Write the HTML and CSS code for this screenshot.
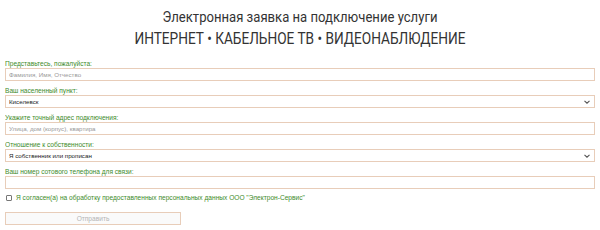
FILE: index.html
```html
<!DOCTYPE html>
<html>
<head>
  <meta charset="UTF-8" />
  <title>Электронная заявка</title>
  <link rel="stylesheet" href="styles.css">
</head>
<body>
  <div class="head">
    <div class="head-top">Электронная заявка на подключение услуги</div>
    <div class="head-main">ИНТЕРНЕТ • КАБЕЛЬНОЕ ТВ • ВИДЕОНАБЛЮДЕНИЕ</div>
  </div>

  <form class="order">
    <label class="field">
      <span class="caption">Представьтесь, пожалуйста:</span>
      <input type="text" placeholder="Фамилия, Имя, Отчество" />
    </label>
    <label class="field">
      <span class="caption">Ваш населенный пункт:</span>
      <span class="select-wrap">
        <select>
          <option>Киселевск</option>
        </select>
        <svg class="chevron" width="6" height="4" viewBox="0 0 6 4"><path d="M0.5 0.8 L3 3.2 L5.5 0.8" fill="none" stroke="#555" stroke-width="1.1"/></svg>
      </span>
    </label>
    <label class="field">
      <span class="caption">Укажите точный адрес подключения:</span>
      <input type="text" placeholder="Улица, дом (корпус), квартира" />
    </label>
    <label class="field">
      <span class="caption">Отношение к собственности:</span>
      <span class="select-wrap">
        <select>
          <option>Я собственник или прописан</option>
        </select>
        <svg class="chevron" width="6" height="4" viewBox="0 0 6 4"><path d="M0.5 0.8 L3 3.2 L5.5 0.8" fill="none" stroke="#555" stroke-width="1.1"/></svg>
      </span>
    </label>
    <label class="field">
      <span class="caption">Ваш номер сотового телефона для связи:</span>
      <input type="text" />
    </label>
    <label class="agree">
      <input type="checkbox" />
      <span>Я согласен(а) на обработку предоставленных персональных данных ООО "Электрон-Сервис"</span>
    </label>
    <button type="button" disabled>Отправить</button>
  </form>
</body>
</html>
```

FILE: styles.css
```css
body {
  font-family: "Liberation Sans", Arial, sans-serif;
  margin: 5px;
  background: #fff;
}
.head {
  text-align: center;
  color: #333;
  font-family: Roboto, sans-serif;
  padding-top: 2px;
}
.head-top {
  font-size: 15.5px;
  line-height: 20px;
  transform: scaleX(0.845);
}
.head-main {
  font-size: 17.3px;
  line-height: 22px;
  transform: scaleX(0.79);
}
.order {
  margin-top: 10px;
}
.field {
  display: block;
  margin-bottom: 5px;
}
.caption {
  display: block;
  color: #3d8b2a;
  font-size: 6.6px;
  line-height: 9px;
}
input[type=text], select {
  display: block;
  width: 100%;
  height: 13px;
  box-sizing: border-box;
  border: 1px solid #e8cdb9;
  font-size: 6.2px;
  padding: 0 3px;
  font-family: inherit;
  color: #222;
  background: #fff;
  outline: none;
  border-radius: 0;
}
select {
  appearance: none;
  -webkit-appearance: none;
}
input::placeholder {
  color: #999;
}
.select-wrap {
  position: relative;
  display: block;
}
.chevron {
  position: absolute;
  right: 5px;
  top: 5px;
}
.agree {
  display: flex;
  align-items: center;
  gap: 4px;
  font-size: 6.6px;
  color: #3d8b2a;
  margin: 5px 0 11px 1px;
}
.agree input {
  appearance: none;
  -webkit-appearance: none;
  margin: 0;
  width: 6px;
  height: 6px;
  border: 1px solid #777;
  border-radius: 1px;
  box-sizing: border-box;
  background: #fff;
}
button {
  display: block;
  width: 176px;
  height: 13px;
  border: 1px solid #e8cdb9;
  background: #fafafa;
  color: #b5b5b5;
  font-size: 6.6px;
  font-family: inherit;
  padding: 0;
}
```
